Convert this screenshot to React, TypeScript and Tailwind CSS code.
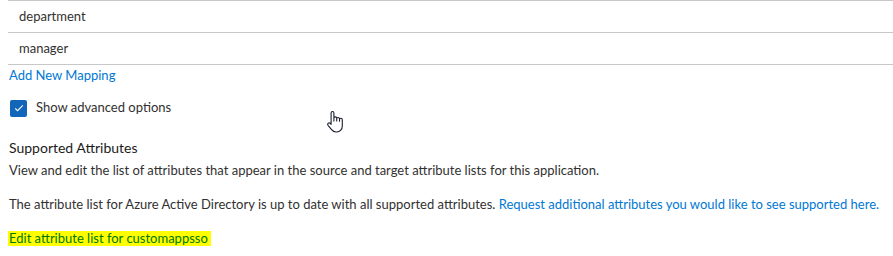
import React from 'react';

const rows = ['department', 'manager'];

function HandCursor() {
  return (
    <svg width="20" height="24" viewBox="0 0 20 24" className="absolute left-[326px] top-[110px]">
      <path
        d="M6.5 1.5c.8 0 1.4.6 1.4 1.4v8.2V8.3c0-.8.6-1.4 1.4-1.4s1.4.6 1.4 1.4v2.6-2c0-.8.6-1.4 1.4-1.4s1.4.6 1.4 1.4v2.4-1.6c0-.8.6-1.4 1.4-1.4s1.4.6 1.4 1.4v6.2c0 3.3-2.2 6.1-5.6 6.1H10c-2 0-3.2-.8-4.4-2.3L2 15.3c-.5-.7-.4-1.6.3-2.1.6-.5 1.5-.4 2 .2l.8 1V2.9c0-.8.6-1.4 1.4-1.4z"
        fill="#fff"
        stroke="#1b1f2e"
        strokeWidth="1.1"
        strokeLinejoin="round"
      />
    </svg>
  );
}

export default function App() {
  return (
    <div
      className="relative w-[893px] h-[256px] bg-white overflow-hidden text-[13px] text-[#323130] whitespace-nowrap"
      style={{ fontFamily: 'Lato, "Noto Sans", sans-serif' }}
    >
      <div className="ml-2 border-t border-[#c8c8c8]">
        {rows.map((r) => (
          <div key={r} className="h-[32px] flex items-center pl-[11px] border-b border-[#c8c8c8]">
            {r}
          </div>
        ))}
      </div>
      <div className="pl-[9px] mt-[1px] leading-[18px] text-[#0078d4]">Add New Mapping</div>

      <label className="flex items-center gap-[9px] pl-[10px] mt-[15px] h-[18px]">
        <span className="w-[17px] h-[17px] rounded-[2px] bg-[#1166b9] flex items-center justify-center">
          <svg width="12" height="12" viewBox="0 0 12 12">
            <path d="M2.2 6.3l2.4 2.4 5.2-5.4" fill="none" stroke="#fff" strokeWidth="1.1" />
          </svg>
        </span>
        <span>Show advanced options</span>
      </label>

      <div className="pl-[9px] mt-[21px] text-[14px] leading-[20px] text-[#1b1b1b]">Supported Attributes</div>
      <div className="pl-[9px] mt-[3px] leading-[18px]">
        View and edit the list of attributes that appear in the source and target attribute lists for this application.
      </div>
      <div className="pl-[9px] mt-[16px] leading-[18px]">
        The attribute list for Azure Active Directory is up to date with all supported attributes.{' '}
        <span className="text-[#0078d4]">Request additional attributes you would like to see supported here.</span>
      </div>
      <div className="pl-[8px] mt-[18px] leading-[15px]">
        <span className="inline-block bg-[#ffff00] text-[#007800] pr-[3px] pl-[1px]">
          Edit attribute list for customappsso
        </span>
      </div>

      <HandCursor />
    </div>
  );
}
